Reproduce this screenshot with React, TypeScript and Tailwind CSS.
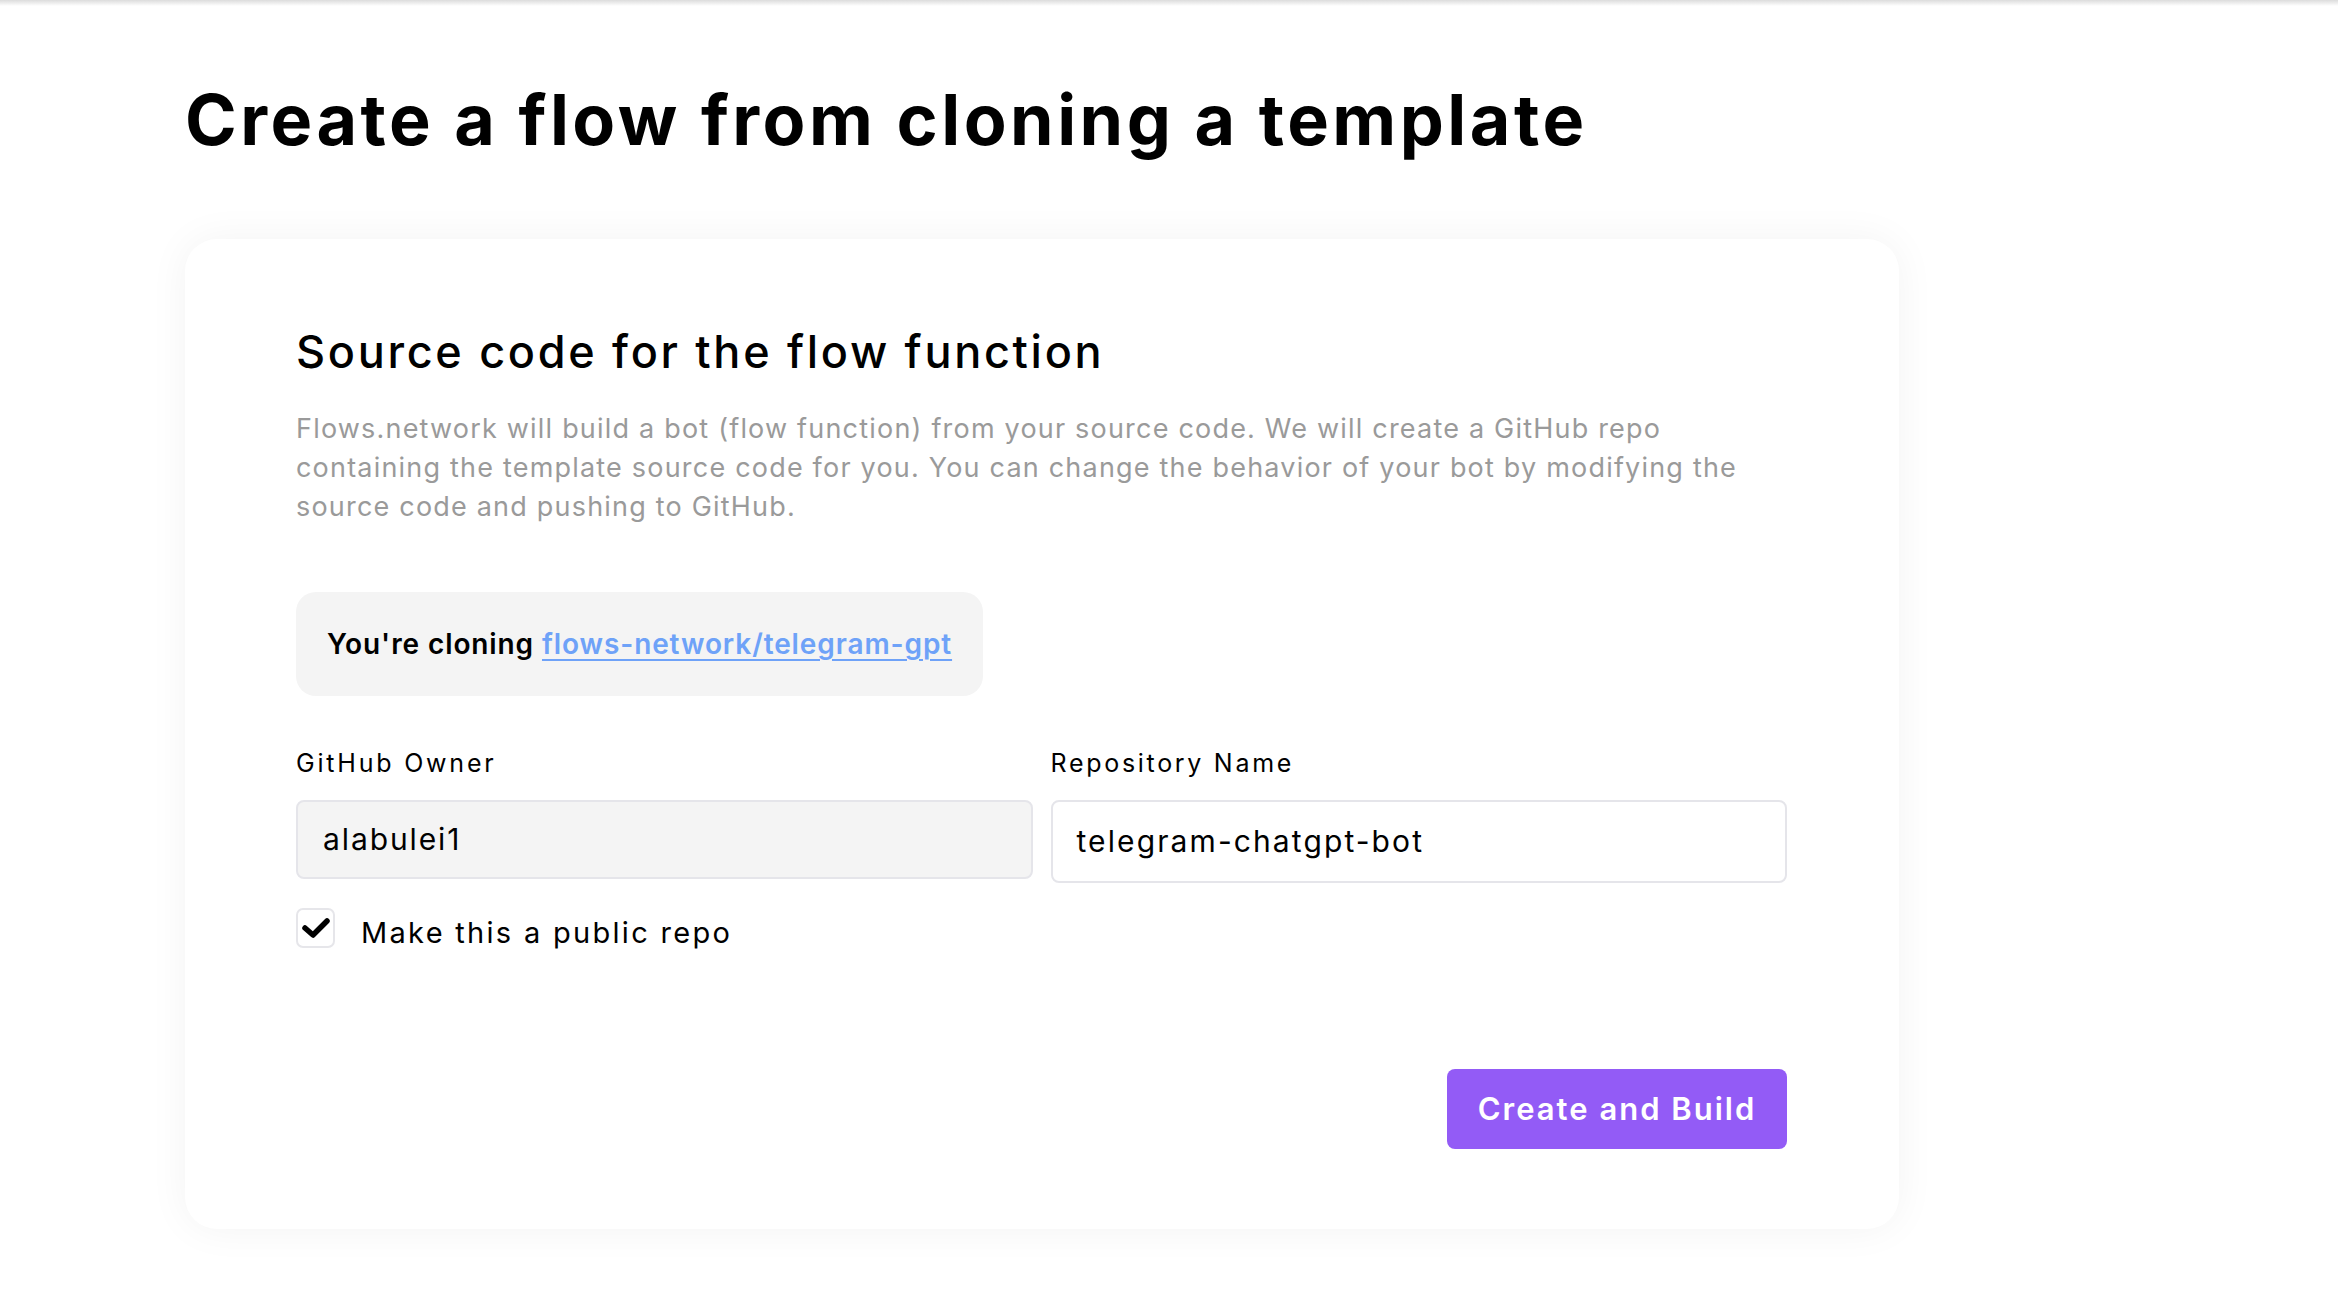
import React from "react";

export default function App() {
  const font = { fontFamily: "Inter, 'Noto Sans', sans-serif" };
  return (
    <div className="min-h-[1296px] w-full bg-white text-black relative" style={font}>
      <div className="absolute top-0 left-0 right-0 h-[6px] bg-gradient-to-b from-[#dcdcdc] to-white" />
      <div className="pl-[185px] pt-[85px] pb-[60px]">
        <h1 className="text-[70px] leading-[70px] font-bold tracking-[3.5px] text-black">
          Create a flow from cloning a template
        </h1>
        <div className="mt-[84px] w-[1714px] rounded-[32px] bg-white shadow-[0_0_40px_rgba(0,0,0,0.05)] pl-[111px] pr-[112px] pt-[90px] pb-[80px]">
          <h2 className="text-[45px] leading-[45px] font-medium tracking-[2.7px] text-black">
            Source code for the flow function
          </h2>
          <p className="mt-[35px] text-[27px] leading-[39px] tracking-[1.2px] text-[#9a9a9a] whitespace-nowrap">
            Flows.network will build a bot (flow function) from your source code. We will create a GitHub repo
            <br />
            containing the template source code for you. You can change the behavior of your bot by modifying the
            <br />
            source code and pushing to GitHub.
          </p>
          <div className="mt-[66px] inline-flex h-[104px] items-center rounded-[20px] bg-[#f4f4f4] px-[31px] text-[28px] font-semibold tracking-[0.9px]">
            <span className="text-black">You're cloning&nbsp;</span>
            <a href="#" className="text-[#6ea2f8] underline decoration-2 underline-offset-[5px]">
              flows-network/telegram-gpt
            </a>
          </div>
          <div className="mt-[55px] grid grid-cols-2 gap-x-[18px] items-start">
            <div>
              <div className="text-[25px] leading-[25px] tracking-[2.8px] text-black">GitHub Owner</div>
              <div className="mt-[24px] flex h-[79px] items-center rounded-[8px] border-2 border-[#e5e5ea] bg-[#f4f4f4] px-[25px] text-[30px] tracking-[1.9px] text-black">
                alabulei1
              </div>
            </div>
            <div>
              <div className="text-[25px] leading-[25px] tracking-[2.7px] text-black">Repository Name</div>
              <div className="mt-[24px] flex h-[83px] items-center rounded-[8px] border-2 border-[#e5e5ea] bg-white px-[24px] text-[30px] tracking-[2.1px] text-black">
                telegram-chatgpt-bot
              </div>
            </div>
          </div>
          <div className="mt-[25px] flex items-center gap-[26px]">
            <div className="flex h-[40px] w-[39px] items-center justify-center rounded-[7px] border-2 border-[#e6e6ea] bg-white">
              <svg width="30" height="24" viewBox="0 0 30 24">
                <path d="M4 12 L12 19 L26 5" fill="none" stroke="#000" strokeWidth="5.5" strokeLinecap="round" strokeLinejoin="round" />
              </svg>
            </div>
            <span className="mt-[8px] text-[29px] leading-[29px] tracking-[2.3px] text-black">Make this a public repo</span>
          </div>
          <div className="mt-[121px] flex justify-end">
            <button className="h-[80px] w-[340px] rounded-[8px] bg-[#935bf6] text-[31px] font-semibold tracking-[2px] text-white">
              Create and Build
            </button>
          </div>
        </div>
      </div>
    </div>
  );
}
